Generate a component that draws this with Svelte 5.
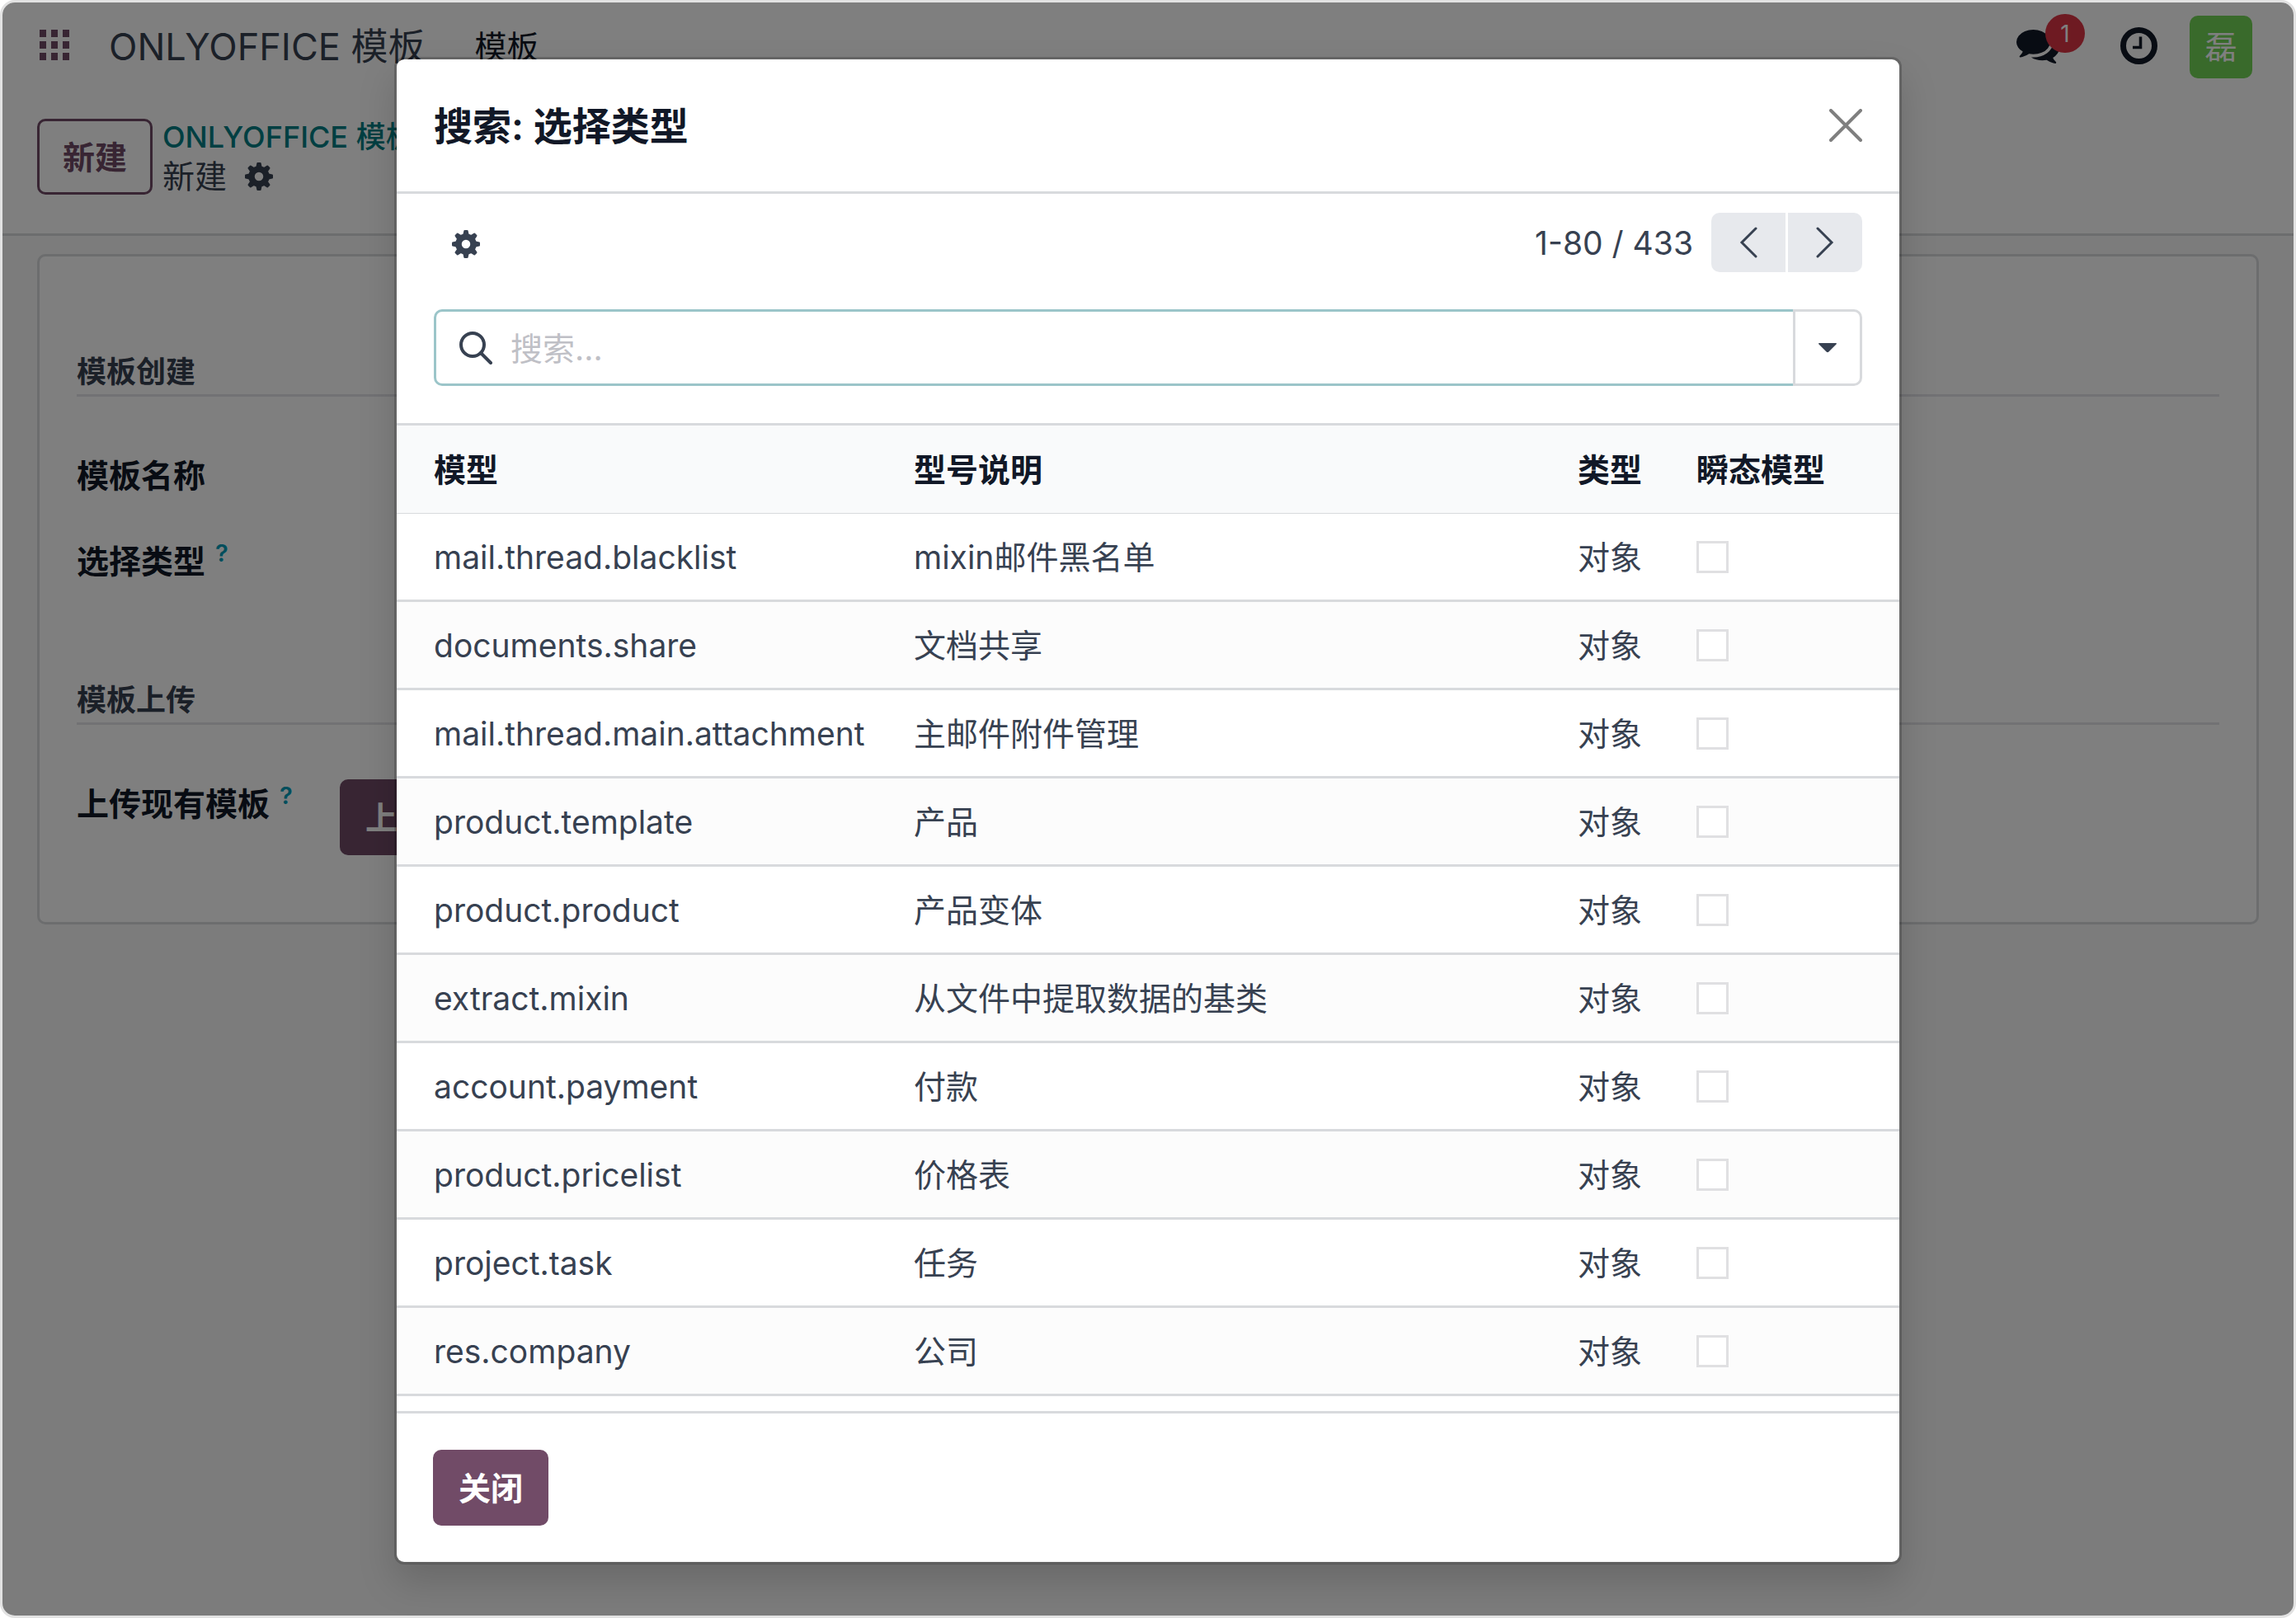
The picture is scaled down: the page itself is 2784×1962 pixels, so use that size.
<script>
  const rows = [
    ['mail.thread.blacklist', 'mixin邮件黑名单'],
    ['documents.share', '文档共享'],
    ['mail.thread.main.attachment', '主邮件附件管理'],
    ['product.template', '产品'],
    ['product.product', '产品变体'],
    ['extract.mixin', '从文件中提取数据的基类'],
    ['account.payment', '付款'],
    ['product.pricelist', '价格表'],
    ['project.task', '任务'],
    ['res.company', '公司'],
  ];
  const dots = [0, 14, 28];
  const teeth = [0, 45, 90, 135, 180, 225, 270, 315];
</script>

{#snippet gear()}
  <svg class="gear" viewBox="0 0 34 34" aria-hidden="true">
    <circle cx="17" cy="17" r="9" fill="none" stroke="currentColor" stroke-width="7.500" />
    {#each teeth as angle}
      <path d="M13.300 6L14.400 0.800Q14.600 0 15.400 0H18.600Q19.400 0 19.600 0.800L20.700 6Z" transform={`rotate(${angle} 17 17)`} />
    {/each}
  </svg>
{/snippet}

<div class="frame">
  <div class="page">
    <header class="navbar">
      <button class="apps" aria-label="应用">
        <svg viewBox="0 0 36 37">
          {#each dots as y}
            {#each dots as x}
              <rect {x} {y} width="8" height="9" />
            {/each}
          {/each}
        </svg>
      </button>
      <a class="brand" href="#home">ONLYOFFICE 模板</a>
      <a class="menu" href="#templates">模板</a>
      <div class="tray">
        <button class="chat" aria-label="消息">
          <svg viewBox="0 256 1792 1408">
            <path d="M1408 768q0 139-94 257t-256.500 186.500-353.500 68.500q-86 0-176-16-124 88-278 128-36 9-86 16h-3q-11 0-20.500-8t-11.500-21q-1-3-1-6.500t.5-6.500 2-6l2.500-5 3.500-5.500 4-5 4.500-5 4-4.500q5-6 23-25t26-29.500 22.500-29 25-38.500 20.500-44q-124-72-195-177t-71-224q0-139 94-257t256.500-186.500 353.500-68.500 353.500 68.500 256.500 186.500 94 257zm384 256q0 120-71 224.500t-195 176.500q10 24 20.500 44t25 38.500 22.500 29 26 29.500 23 25q1 1 4 4.500t4.500 5 4 5 3.500 5.500l2.500 5 2 6 .5 6.500-1 6.500q-3 14-13 22t-22 7q-50-7-86-16-154-40-278-128-90 16-176 16-271 0-472-132 58 4 88 4 161 0 309-45t264-129q125-92 192-212t67-254q0-77-23-152 129 71 204 178t75 230z" />
          </svg>
          <span class="badge">1</span>
        </button>
        <button class="clock" aria-label="活动">
          <svg viewBox="0 0 45 45">
            <circle cx="22.500" cy="22.500" r="19" fill="none" stroke="currentColor" stroke-width="7" />
            <path d="M15 24.500H24.500V11.500" fill="none" stroke="currentColor" stroke-width="3.600" />
          </svg>
        </button>
        <button class="avatar">磊</button>
      </div>
    </header>

    <div class="control">
      <button class="btn outline">新建</button>
      <nav class="crumbs">
        <a href="#list">ONLYOFFICE 模板</a>
        <div class="current">
          <span>新建</span>
          <button class="plain" aria-label="操作">{@render gear()}</button>
        </div>
      </nav>
    </div>

    <main class="content">
      <form class="sheet">
        <section>
          <h2>模板创建</h2>
          <div class="fields">
            <div class="field">
              <label for="name">模板名称</label>
              <input id="name" type="text" />
            </div>
            <div class="field">
              <label for="kind">选择类型<sup>?</sup></label>
              <input id="kind" type="text" />
            </div>
          </div>
        </section>
        <section class="upload">
          <h2>模板上传</h2>
          <div class="fields">
            <div class="field">
              <label for="upload">上传现有模板<sup>?</sup></label>
              <div><button id="upload" type="button" class="btn primary">上传</button></div>
            </div>
          </div>
        </section>
      </form>
    </main>
  </div>

  <div class="backdrop">
    <div class="modal" role="dialog" aria-labelledby="dialog-title">
      <header class="modal-head">
        <h1 id="dialog-title">搜索: 选择类型</h1>
        <button class="plain close" aria-label="关闭对话框">
          <svg viewBox="0 0 40 40"><path d="M2 2L38 38M38 2L2 38" /></svg>
        </button>
      </header>

      <div class="tools">
        <div class="bar">
          <button class="plain cog" aria-label="设置">{@render gear()}</button>
          <div class="pager">
            <span>1-80 / 433</span>
            <div class="pager-buttons">
              <button aria-label="上一页"><svg viewBox="0 0 22 38"><path d="M20 2L3 19L20 36" /></svg></button>
              <button aria-label="下一页"><svg viewBox="0 0 22 38"><path d="M2 2L19 19L2 36" /></svg></button>
            </div>
          </div>
        </div>
        <div class="search">
          <div class="search-box">
            <svg viewBox="0 0 40 40" aria-hidden="true"><circle cx="16" cy="16" r="14" /><path d="M26 26L38 38" /></svg>
            <input type="text" placeholder="搜索..." aria-label="搜索" />
          </div>
          <button class="toggle" aria-label="筛选">
            <svg viewBox="0 0 24 14"><path d="M2 1H22Q24 1 22 3L13.500 11.500Q12 13 10.500 11.500L2 3Q0 1 2 1Z" /></svg>
          </button>
        </div>
      </div>

      <div class="list">
        <table>
          <colgroup>
            <col class="c-model" /><col /><col class="c-type" /><col class="c-flag" />
          </colgroup>
          <thead>
            <tr><th>模型</th><th>型号说明</th><th>类型</th><th>瞬态模型</th></tr>
          </thead>
          <tbody>
            {#each rows as [model, label]}
              <tr>
                <td>{model}</td>
                <td>{label}</td>
                <td>对象</td>
                <td class="flag"><input type="checkbox" disabled aria-label={`瞬态模型 ${model}`} /></td>
              </tr>
            {/each}
          </tbody>
        </table>
      </div>

      <footer class="modal-foot">
        <button class="btn primary">关闭</button>
      </footer>
    </div>
  </div>
</div>

<style>
  :global(body) {
    background: #fff;
  }
  .frame,
  .frame * {
    box-sizing: border-box;
  }
  .frame {
    position: relative;
    min-height: 100vh;
    border: 3px solid #e2e2e2;
    border-radius: 18px;
    overflow: hidden;
    background: #f8f8f9;
    color: #374151;
    font-family: Inter, 'Noto Sans CJK SC', sans-serif;
    font-size: 39px;
    line-height: 60px;
  }
  button,
  input {
    font: inherit;
    color: inherit;
    margin: 0;
  }
  button {
    border: 0;
    padding: 0;
    background: none;
    cursor: pointer;
  }
  a {
    color: inherit;
    text-decoration: none;
  }
  svg {
    display: block;
    fill: currentColor;
  }
  h1,
  h2 {
    margin: 0;
  }
  .gear {
    width: 34px;
    height: 34px;
  }
  .btn {
    height: 92px;
    padding: 2px 28px 0;
    border: 3px solid #714b67;
    border-radius: 10px;
    font-weight: 600;
    white-space: nowrap;
  }
  .outline {
    color: #714b67;
  }
  .primary {
    background: #714b67;
    color: #fff;
  }

  .navbar {
    display: flex;
    align-items: center;
    height: 107px;
    padding: 0 50px 0 45px;
    background: #fff;
    color: #111827;
  }
  .apps {
    padding-bottom: 4px;
    color: #714b67;
  }
  .apps svg {
    width: 36px;
    height: 37px;
  }
  .brand {
    margin-left: 48px;
    font-size: 45px;
    color: #374151;
  }
  .menu {
    margin-left: 60px;
  }
  .tray {
    display: flex;
    align-items: center;
    margin-left: auto;
  }
  .chat {
    position: relative;
  }
  .chat svg {
    width: 52px;
    height: 41px;
  }
  .badge {
    position: absolute;
    left: 35px;
    top: -19px;
    width: 48px;
    height: 47px;
    border-radius: 24px;
    background: #dc3545;
    color: #fff;
    font-size: 28px;
    line-height: 48px;
    text-align: center;
  }
  .clock {
    margin: 0 39px 0 74px;
    padding-bottom: 3px;
  }
  .clock svg {
    width: 45px;
    height: 45px;
  }
  .avatar {
    width: 76px;
    height: 76px;
    border-radius: 10px;
    background: #72d456;
    color: #fff;
  }

  .control {
    display: flex;
    align-items: center;
    gap: 12px;
    padding: 32px 42px 45px;
    border-bottom: 3px solid #d8dadd;
    background: #fff;
  }
  .crumbs {
    line-height: 48px;
  }
  .crumbs a {
    display: block;
    font-size: 36px;
    font-weight: 500;
    color: #017e84;
  }
  .current {
    display: flex;
    align-items: center;
    gap: 22px;
  }

  .content {
    padding: 22px 42px;
  }
  .sheet {
    padding: 113px 45px 81px;
    border: 3px solid #d8dadd;
    border-radius: 10px;
    background: #fff;
  }
  h2 {
    border-bottom: 3px solid #e4e5e8;
    font-size: 36px;
    line-height: 54px;
    font-weight: 700;
  }
  .fields {
    padding-top: 66px;
  }
  .field {
    display: grid;
    grid-template-columns: 319px 1fr;
    align-items: start;
    min-height: 104px;
  }
  .upload {
    margin-top: 67px;
  }
  .upload .field {
    min-height: 92px;
  }
  .field label {
    color: #111827;
    font-weight: 600;
  }
  .field input {
    width: 50%;
    height: 60px;
    border: 0;
    background: none;
  }
  sup {
    margin-left: 12px;
    font-size: 29px;
    line-height: 0;
    color: #009cb8;
  }

  .backdrop {
    position: absolute;
    inset: 0;
    display: flex;
    justify-content: center;
    padding: 66px 45px 62px;
    background: rgba(0, 0, 0, 0.5);
  }
  .modal {
    display: flex;
    flex-direction: column;
    width: 100%;
    max-width: 1828px;
    border: 3px solid rgba(0, 0, 0, 0.2);
    border-radius: 12px;
    background: #fff;
    background-clip: padding-box;
    box-shadow: 0 22px 45px rgba(0, 0, 0, 0.15);
  }
  .modal-head {
    display: flex;
    align-items: center;
    justify-content: space-between;
    height: 163px;
    padding: 0 45px;
    border-bottom: 3px solid #d8dadd;
    color: #111827;
  }
  h1 {
    padding-top: 2px;
    font-size: 47px;
    font-weight: 600;
  }
  .close svg {
    width: 40px;
    height: 40px;
    fill: none;
    stroke: #7f7f7f;
    stroke-width: 4;
    stroke-linecap: round;
  }
  .tools {
    padding: 23px 45px 45px;
    border-bottom: 3px solid #d8dadd;
  }
  .bar,
  .pager,
  .pager-buttons {
    display: flex;
    align-items: center;
  }
  .bar {
    justify-content: space-between;
    margin-bottom: 45px;
  }
  .cog {
    padding: 4px 22px 0;
  }
  .pager {
    gap: 22px;
  }
  .pager span {
    padding-top: 2px;
  }
  .pager-buttons {
    gap: 3px;
  }
  .pager-buttons button {
    display: grid;
    place-items: center;
    width: 90px;
    height: 72px;
    background: #e7e9ed;
  }
  .pager-buttons button:first-child {
    border-radius: 10px 0 0 10px;
  }
  .pager-buttons button:last-child {
    border-radius: 0 10px 10px 0;
  }
  .pager-buttons svg {
    width: 22px;
    height: 38px;
    fill: none;
    stroke: currentColor;
    stroke-width: 3;
    stroke-linecap: round;
  }
  .search {
    display: flex;
    height: 93px;
  }
  .search-box {
    flex: 1;
    display: flex;
    align-items: center;
    gap: 22px;
    padding-left: 28px;
    border: 3px solid #9bc5c9;
    border-right: 0;
    border-radius: 10px 0 0 10px;
  }
  .search-box svg {
    width: 40px;
    height: 40px;
    fill: none;
    stroke: currentColor;
    stroke-width: 4;
    stroke-linecap: round;
  }
  .search-box input {
    flex: 1;
    padding: 2px 0 0;
    border: 0;
    outline: 0;
    background: none;
  }
  .search-box input::placeholder {
    color: #bfc0c6;
    opacity: 1;
  }
  .toggle {
    display: grid;
    place-items: center;
    width: 84px;
    border: 3px solid #d8dadd;
    border-radius: 0 10px 10px 0;
  }
  .toggle svg {
    width: 24px;
    height: 14px;
  }

  .list {
    flex: 1;
  }
  table {
    width: 100%;
    table-layout: fixed;
    border-collapse: separate;
    border-spacing: 0;
  }
  .c-model {
    width: 627px;
  }
  .c-type {
    width: 144px;
  }
  .c-flag {
    width: 246px;
  }
  th,
  td {
    height: 107px;
    padding: 2px 0 0;
    text-align: left;
    white-space: nowrap;
    border-bottom: 3px solid #d8dadd;
  }
  .flag {
    padding-top: 0;
  }
  th {
    border-bottom-width: 1px;
    background: #f9fafb;
    color: #111827;
    font-weight: 600;
  }
  th:first-child,
  td:first-child {
    padding-left: 45px;
  }
  tbody tr:nth-child(even) {
    background: #fcfcfc;
  }
  td input {
    display: block;
    appearance: none;
    width: 39px;
    height: 39px;
    border: 3px solid #e0e0e2;
    background: #fff;
  }
  .modal-foot {
    padding: 44px;
    border-top: 3px solid #d8dadd;
    line-height: 0;
  }
</style>
